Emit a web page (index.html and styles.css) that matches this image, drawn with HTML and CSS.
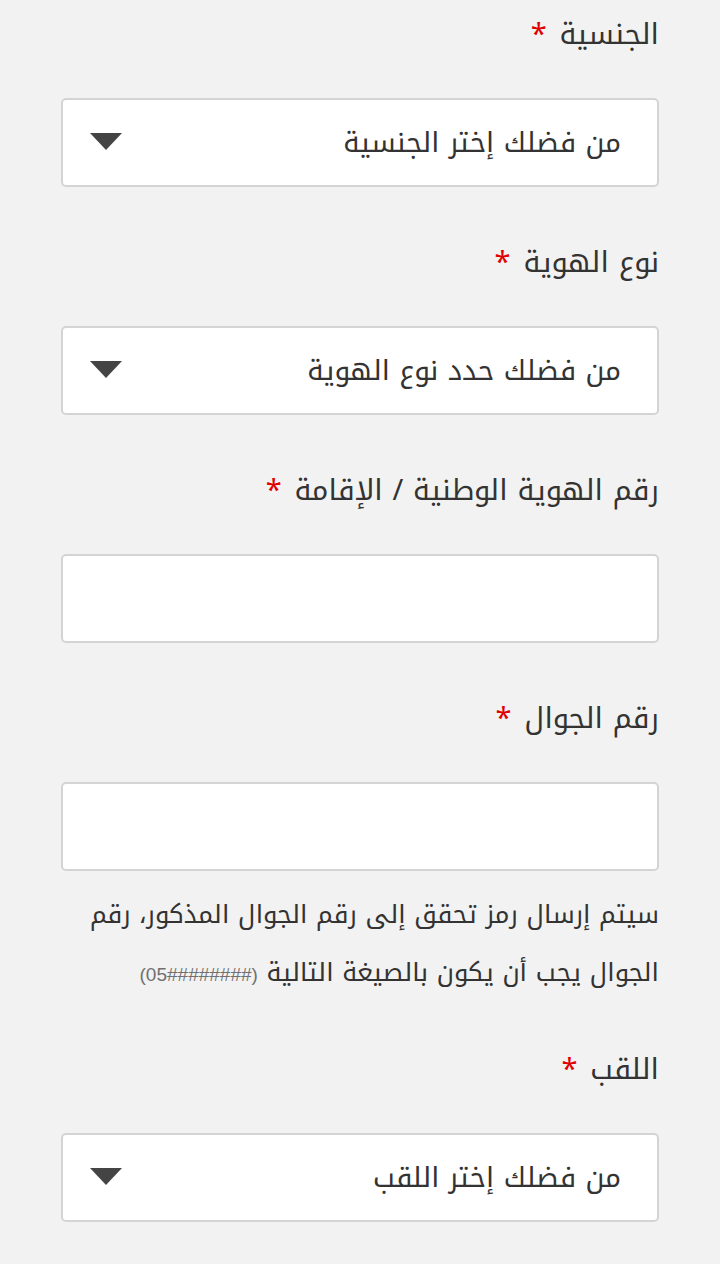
FILE: index.html
```html
<!DOCTYPE html>
<html lang="ar" dir="rtl">
<head>
<meta charset="utf-8">
<title>نموذج</title>
<link rel="stylesheet" href="styles.css">
</head>
<body>
<form class="form">
  <div class="field">
    <label class="label">الجنسية <span class="req">*</span></label>
    <div class="select">
      <span class="select-text">من فضلك إختر الجنسية</span>
      <svg class="caret" width="32" height="17" viewBox="0 0 32 17"><path d="M0 0H32L16 17Z" fill="#444"/></svg>
    </div>
  </div>
  <div class="field">
    <label class="label">نوع الهوية <span class="req">*</span></label>
    <div class="select">
      <span class="select-text">من فضلك حدد نوع الهوية</span>
      <svg class="caret" width="32" height="17" viewBox="0 0 32 17"><path d="M0 0H32L16 17Z" fill="#444"/></svg>
    </div>
  </div>
  <div class="field">
    <label class="label">رقم الهوية الوطنية / الإقامة <span class="req">*</span></label>
    <div class="input"></div>
  </div>
  <div class="field phone">
    <label class="label">رقم الجوال <span class="req">*</span></label>
    <div class="input"></div>
    <p class="hint">سيتم إرسال رمز تحقق إلى رقم الجوال المذكور، رقم الجوال يجب أن يكون بالصيغة التالية <bdi class="fmt" dir="ltr">(05########)</bdi></p>
  </div>
  <div class="field">
    <label class="label">اللقب <span class="req">*</span></label>
    <div class="select">
      <span class="select-text">من فضلك إختر اللقب</span>
      <svg class="caret" width="32" height="17" viewBox="0 0 32 17"><path d="M0 0H32L16 17Z" fill="#444"/></svg>
    </div>
  </div>
</form>
</body>
</html>
```
FILE: styles.css
```css
* { box-sizing: border-box; }
html, body { margin: 0; padding: 0; }
body {
  background: #f2f2f2;
  min-height: 100vh;
  border-bottom: 2px solid #d6d6d6;
  font-family: "Noto Kufi Arabic", "Noto Sans Arabic", "DejaVu Sans", sans-serif;
  color: #333;
}
.form {
  display: flex;
  flex-direction: column;
  padding: 15px 61px 0;
}
.field {
  display: flex;
  flex-direction: column;
  margin-bottom: 56px;
}
.field.phone { margin-bottom: 46px; }
.label {
  display: block;
  font-size: 29px;
  line-height: 40px;
  height: 40px;
  color: #333;
  margin-bottom: 43px;
}
.req { color: #e00000; margin-right: 3px; }
.select, .input {
  height: 89px;
  background: #fff;
  border: 2px solid #d4d4d4;
  border-radius: 5px;
}
.select {
  display: flex;
  align-items: center;
  justify-content: space-between;
  padding: 0 36px 0 27px;
}
.select-text {
  font-size: 28px;
  color: #333;
}
.caret { display: block; margin-top: -2px; }
.hint {
  margin: 15px 0 0;
  padding-left: 10px;
  font-size: 25.6px;
  line-height: 58px;
  color: #333;
}
.fmt {
  font-family: "Liberation Sans", sans-serif;
  font-size: 19px;
  color: #707070;
}
```
